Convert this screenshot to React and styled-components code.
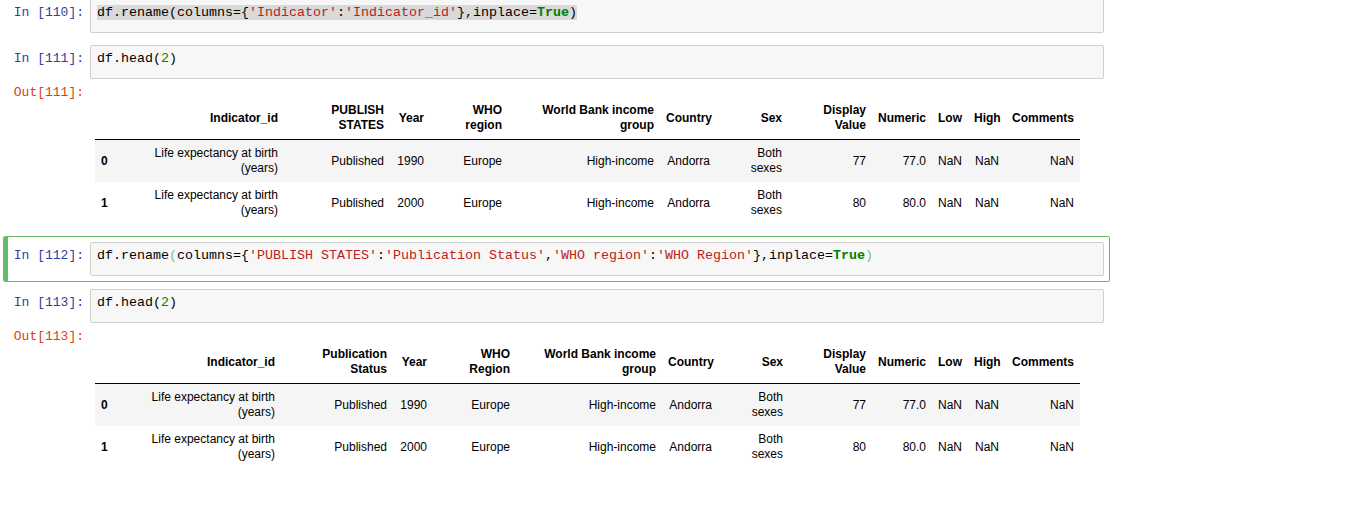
import React from "react";
import styled, { createGlobalStyle } from "styled-components";

const GlobalStyle = createGlobalStyle`
  body {
    margin: 0;
    background: #fff;
  }
`;

const rows = [
  { idx: "0", year: "1990", value: "77", numeric: "77.0" },
  { idx: "1", year: "2000", value: "80", numeric: "80.0" }
];

const Notebook = styled.div`
  width: 1107px;
  margin: -7px 0 0 3px;
`;

const Cell = styled.div`
  border: 1px solid ${(p) => (p.selected ? "#66bb6a" : "transparent")};
  box-shadow: ${(p) => (p.selected ? "inset 4px 0 0 #66bb6a" : "none")};
  border-radius: 2px;
  padding: 5px;
  margin-bottom: ${(p) => p.mb || "0"};
`;

const Row = styled.div`
  display: flex;
  align-items: flex-start;
`;

const Prompt = styled.div`
  flex: none;
  width: 75px;
  padding: 5px 6px 0 0;
  text-align: right;
  font-family: "Liberation Mono", monospace;
  font-size: 13px;
  line-height: 17px;
  color: ${(p) => p.color};
  white-space: pre;
`;

const InputArea = styled.div`
  flex: 1;
  border: 1px solid #cfcfcf;
  border-radius: 2px;
  background: #f7f7f7;
  padding: 4px 6px 11px 6px;
  font-family: "Liberation Mono", monospace;
  font-size: 13.33px;
  line-height: 17px;
  color: #000;
  white-space: pre;
`;

const Str = styled.span`
  color: #ba2121;
`;

const Kw = styled.span`
  color: #008000;
  font-weight: bold;
`;

const Num = styled.span`
  color: #008800;
`;

const Bracket = styled.span`
  color: #7cc47c;
`;

const Selected = styled.span`
  background: #d9d9d9;
`;

const OutputSub = styled.div`
  flex: 1;
  padding: 18px 0 6px 5px;
`;

const Table = styled.table`
  border-collapse: collapse;
  border-spacing: 0;
  table-layout: fixed;
  width: 985px;
  font-family: "Liberation Sans", Arial, sans-serif;
  font-size: 12px;
  color: #000;

  thead tr {
    border-bottom: 1px solid #000;
  }
  tbody tr:nth-child(odd) {
    background: #f5f5f5;
  }
`;

const Th = styled.th`
  padding: 6px;
  text-align: ${(p) => p.align || "right"};
  vertical-align: middle;
  line-height: 15px;
  font-weight: bold;
  white-space: nowrap;
`;

const Td = styled.td`
  padding: 6px;
  text-align: right;
  vertical-align: middle;
  line-height: 15px;
  white-space: nowrap;
`;

const DataTable = ({ widths, publishHead, regionHead }) => (
  <Table>
    <colgroup>
      {widths.map((w, i) => (
        <col key={i} style={{ width: w }} />
      ))}
    </colgroup>
    <thead>
      <tr>
        <Th />
        <Th>Indicator_id</Th>
        <Th>{publishHead[0]}<br />{publishHead[1]}</Th>
        <Th>Year</Th>
        <Th>{regionHead[0]}<br />{regionHead[1]}</Th>
        <Th>World Bank income<br />group</Th>
        <Th>Country</Th>
        <Th>Sex</Th>
        <Th>Display<br />Value</Th>
        <Th>Numeric</Th>
        <Th>Low</Th>
        <Th>High</Th>
        <Th>Comments</Th>
      </tr>
    </thead>
    <tbody>
      {rows.map((r) => (
        <tr key={r.idx}>
          <Th align="left">{r.idx}</Th>
          <Td>Life expectancy at birth<br />(years)</Td>
          <Td>Published</Td>
          <Td>{r.year}</Td>
          <Td>Europe</Td>
          <Td>High-income</Td>
          <Td>Andorra</Td>
          <Td>Both<br />sexes</Td>
          <Td>{r.value}</Td>
          <Td>{r.numeric}</Td>
          <Td>NaN</Td>
          <Td>NaN</Td>
          <Td>NaN</Td>
        </tr>
      ))}
    </tbody>
  </Table>
);

const IN = "#303f9f";
const OUT = "#d84315";

const App = () => (
  <>
    <GlobalStyle />
    <Notebook>
      <Cell>
        <Row>
          <Prompt color={IN}>In [110]:</Prompt>
          <InputArea>
            <Selected>
              df.rename(columns={"{"}
              <Str>'Indicator'</Str>:<Str>'Indicator_id'</Str>
              {"}"},inplace=<Kw>True</Kw>)
            </Selected>
          </InputArea>
        </Row>
      </Cell>

      <Cell>
        <Row>
          <Prompt color={IN}>In [111]:</Prompt>
          <InputArea>
            df.head(<Num>2</Num>)
          </InputArea>
        </Row>
        <Row>
          <Prompt color={OUT}>Out[111]:</Prompt>
          <OutputSub>
            <DataTable
              widths={[50, 139, 106, 40, 78, 152, 56, 72, 84, 60, 36, 37, 75]}
              publishHead={["PUBLISH", "STATES"]}
              regionHead={["WHO", "region"]}
            />
          </OutputSub>
        </Row>
      </Cell>

      <Cell selected mb="1px">
        <Row>
          <Prompt color={IN}>In [112]:</Prompt>
          <InputArea>
            df.rename<Bracket>(</Bracket>columns={"{"}
            <Str>'PUBLISH STATES'</Str>:<Str>'Publication Status'</Str>,
            <Str>'WHO region'</Str>:<Str>'WHO Region'</Str>
            {"}"},inplace=<Kw>True</Kw>
            <Bracket>)</Bracket>
          </InputArea>
        </Row>
      </Cell>

      <Cell>
        <Row>
          <Prompt color={IN}>In [113]:</Prompt>
          <InputArea>
            df.head(<Num>2</Num>)
          </InputArea>
        </Row>
        <Row>
          <Prompt color={OUT}>Out[113]:</Prompt>
          <OutputSub>
            <DataTable
              widths={[50, 136, 112, 40, 83, 146, 56, 71, 83, 60, 36, 37, 75]}
              publishHead={["Publication", "Status"]}
              regionHead={["WHO", "Region"]}
            />
          </OutputSub>
        </Row>
      </Cell>
    </Notebook>
  </>
);

export default App;
